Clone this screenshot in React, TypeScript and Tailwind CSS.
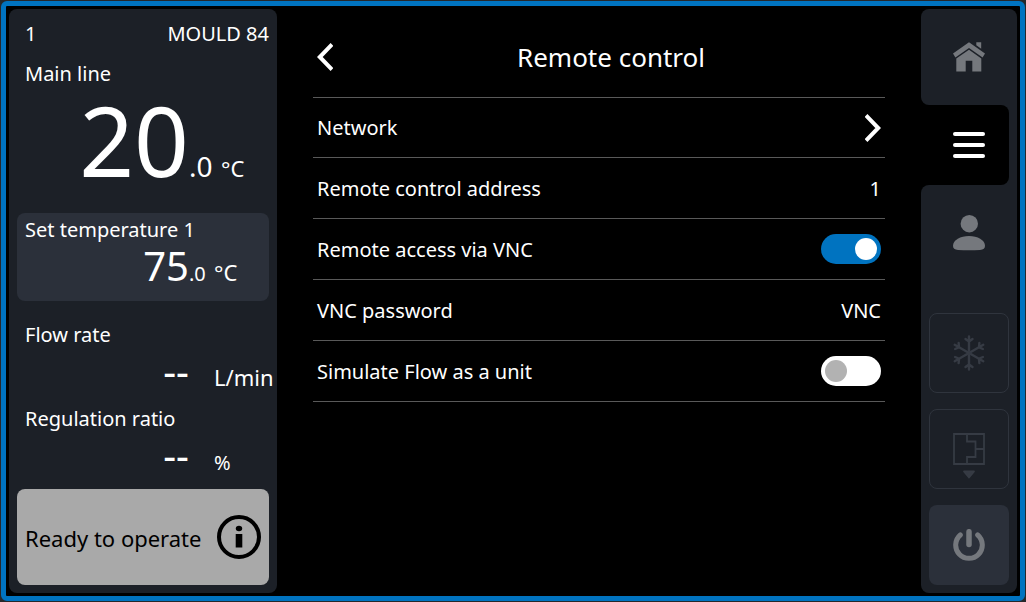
import { useState } from "react";
import type { ReactNode } from "react";

type ReadingProps = {
  label: string;
  value: string;
  decimal?: string;
  unit: string;
  unitClass?: string;
};

function Reading({ label, value, decimal, unit, unitClass = "text-[22px]" }: ReadingProps) {
  return (
    <div>
      <div className="px-2 text-xl leading-7">{label}</div>
      <div className="mt-0.5 flex h-10 items-baseline">
        <span className="flex-1 text-right text-[40px] leading-10">{value}</span>
        <span className="w-[25px] text-xl leading-7">{decimal}</span>
        <span className={`w-[55px] whitespace-nowrap leading-7 ${unitClass}`}>{unit}</span>
      </div>
    </div>
  );
}

function InfoIcon() {
  return (
    <svg viewBox="0 0 44 44" className="size-11 shrink-0" aria-hidden="true">
      <circle cx="22" cy="22" r="20" fill="none" stroke="#000" strokeWidth="4" />
      <ellipse cx="22" cy="13.5" rx="3.2" ry="2.7" />
      <path d="M18.7 19h6.6v13.5h-6.6z" />
    </svg>
  );
}

function StatusPanel() {
  return (
    <aside className="flex w-[268px] shrink-0 flex-col rounded-lg bg-[#1c2027] px-2 pt-[11px] pb-2">
      <div className="flex justify-between pl-2 text-xl leading-7">
        <span>1</span>
        <span>MOULD 84</span>
      </div>
      <div className="mt-3 px-2 text-xl leading-7">Main line</div>
      <div className="mt-0.5 flex h-[100px] items-baseline">
        <span className="flex-1 text-right text-[96px] leading-[100px]">20</span>
        <span className="w-8 text-[28px] leading-7">.0</span>
        <span className="w-12 text-[22px] leading-7">°C</span>
      </div>
      <button type="button" className="mt-[23px] h-[88px] rounded-lg bg-[#2b303a] pt-[3px] pb-[15px] text-left">
        <Reading label="Set temperature 1" value="75" decimal=".0" unit="°C" />
      </button>
      <div className="mt-5 flex flex-col gap-3.5">
        <Reading label="Flow rate" value="--" unit="L/min" />
        <Reading label="Regulation ratio" value="--" unit="%" unitClass="text-xl" />
      </div>
      <button
        type="button"
        className="mt-auto flex h-24 items-center justify-between rounded-lg bg-[#a9a9a9] px-2 text-[22px] text-black"
      >
        <span className="pt-0.5">Ready to operate</span>
        <InfoIcon />
      </button>
    </aside>
  );
}

function Chevron({ direction }: { direction: "left" | "right" }) {
  return (
    <svg
      viewBox="0 0 16 28"
      className="h-7 w-4"
      fill="none"
      stroke="currentColor"
      strokeWidth="4"
      aria-hidden="true"
    >
      <path d={direction === "left" ? "M15 1.5 2.8 14 15 26.5" : "M1 1.5 13.2 14 1 26.5"} />
    </svg>
  );
}

const rowClass = "flex items-center justify-between border-b border-[#595959] px-1 text-xl";

function SettingRow({ id, label, children }: { id: string; label: string; children: ReactNode }) {
  return (
    <div className={`h-[61px] ${rowClass}`}>
      <label htmlFor={id} className="pt-0.5">
        {label}
      </label>
      {children}
    </div>
  );
}

function TextValue({ id, initial }: { id: string; initial: string }) {
  const [value, setValue] = useState(initial);
  return (
    <input
      id={id}
      type="text"
      value={value}
      onChange={(e) => setValue(e.target.value)}
      className="w-40 bg-transparent pt-0.5 text-right outline-none"
    />
  );
}

function Toggle({ id, initial }: { id: string; initial: boolean }) {
  const [on, setOn] = useState(initial);
  return (
    <input
      id={id}
      type="checkbox"
      role="switch"
      checked={on}
      onChange={(e) => setOn(e.target.checked)}
      className="flex h-[30px] w-[60px] cursor-pointer appearance-none items-center rounded-full bg-white px-1 before:size-[22px] before:rounded-full before:bg-[#b2b2b2] before:content-[''] checked:justify-end checked:bg-[#0073c0] checked:before:bg-white"
    />
  );
}

function RemoteControl() {
  return (
    <main className="min-w-0 flex-1 px-9">
      <header className="flex h-[89px] items-center border-b border-[#595959] pt-2">
        <button type="button" aria-label="Back" className="w-6 pl-1">
          <Chevron direction="left" />
        </button>
        <h1 className="flex-1 text-center text-[26px]">Remote control</h1>
      </header>
      <button type="button" className={`h-15 w-full ${rowClass}`}>
        Network
        <Chevron direction="right" />
      </button>
      <SettingRow id="address" label="Remote control address">
        <TextValue id="address" initial="1" />
      </SettingRow>
      <SettingRow id="vnc" label="Remote access via VNC">
        <Toggle id="vnc" initial={true} />
      </SettingRow>
      <SettingRow id="password" label="VNC password">
        <TextValue id="password" initial="VNC" />
      </SettingRow>
      <SettingRow id="simulate" label="Simulate Flow as a unit">
        <Toggle id="simulate" initial={false} />
      </SettingRow>
    </main>
  );
}

function HomeIcon() {
  return (
    <svg viewBox="0 0 32 30" className="h-[30px] w-8" fill="currentColor" aria-hidden="true">
      <path d="M16 0.3 0 11.6l2.4 4L16 5.9l13.6 9.7 2.4-4z" />
      <path d="M23.3 0.3h4.9v6.4l-4.900-3.400z" />
      <path d="M16 7.8 3.300 16.500v12.900h9.400V18.700h6.600v10.700h9V16.500z" />
    </svg>
  );
}

function MenuIcon() {
  return (
    <svg viewBox="0 0 32 26" className="h-[26px] w-8" fill="currentColor" aria-hidden="true">
      <rect y="0" width="32" height="4" rx="2" />
      <rect y="11" width="32" height="4" rx="2" />
      <rect y="22" width="32" height="4" rx="2" />
    </svg>
  );
}

function UserIcon() {
  return (
    <svg viewBox="0 0 32 36" className="h-9 w-8" fill="currentColor" aria-hidden="true">
      <circle cx="16.3" cy="8.7" r="8.7" />
      <path d="M16 21c8.500 0 16 4 16 9.700 0 2.800-1.500 4-5 4.200q-11 .6-22 0C1.500 34.700 0 33.500 0 30.700c0-5.700 7.500-9.700 16-9.700z" />
    </svg>
  );
}

function SnowIcon() {
  return (
    <svg
      viewBox="-18 -18 36 36"
      className="size-9"
      fill="none"
      stroke="currentColor"
      strokeWidth="2.4"
      strokeLinecap="round"
      aria-hidden="true"
    >
      {[0, 60, 120, 180, 240, 300].map((angle) => (
        <path key={angle} transform={`rotate(${angle})`} d="M0 0V-16.500M-3.500-14 0-11.500 3.500-14" />
      ))}
    </svg>
  );
}

function MouldIcon() {
  return (
    <svg
      viewBox="0 -14 32 60"
      className="h-15 w-8"
      fill="none"
      stroke="currentColor"
      strokeWidth="1.8"
      aria-hidden="true"
    >
      <path d="M1 1h30v30H1z" />
      <path d="M14 1v7.500h8.500V24H14v7M22.500 16H31" />
      <path d="M11 38.500h10l-5 6z" fill="currentColor" strokeLinejoin="round" />
    </svg>
  );
}

function PowerIcon() {
  return (
    <svg
      viewBox="0 0 32 32"
      className="size-8"
      fill="none"
      stroke="currentColor"
      strokeWidth="5"
      strokeLinecap="round"
      aria-hidden="true"
    >
      <path d="M7.300 6a13.300 13.300 0 1 0 17.400 0" />
      <path d="M16 2.700v12.800" strokeWidth="5.500" />
    </svg>
  );
}

function NavBar() {
  const tile = "flex size-20 items-center justify-center rounded-lg";
  const disabledTile = "border border-[#2f343d] text-[#363b44]";
  return (
    <nav className="flex w-24 shrink-0 flex-col text-[#75787d]">
      <button
        type="button"
        aria-label="Home"
        className="flex h-24 items-center justify-center rounded-t-lg rounded-bl-lg bg-[#1c2027]"
      >
        <HomeIcon />
      </button>
      <div className="bg-[#1c2027] pr-2">
        <button
          type="button"
          aria-label="Menu"
          className="flex h-20 w-full items-center justify-center rounded-r-lg bg-black pl-2 text-white"
        >
          <MenuIcon />
        </button>
      </div>
      <div className="flex flex-1 flex-col items-center rounded-l-lg rounded-br-lg bg-[#1c2027] pb-2">
        <button type="button" aria-label="User" className="flex h-24 w-full items-center justify-center">
          <UserIcon />
        </button>
        <div className="mt-auto flex flex-col gap-4">
          <button type="button" aria-label="Cooling" disabled className={`${tile} ${disabledTile}`}>
            <SnowIcon />
          </button>
          <button type="button" aria-label="Mould evacuation" disabled className={`${tile} ${disabledTile}`}>
            <MouldIcon />
          </button>
          <button type="button" aria-label="Power" className={`${tile} bg-[#2b303a]`}>
            <PowerIcon />
          </button>
        </div>
      </div>
    </nav>
  );
}

export default function App() {
  return (
    <div className="flex min-h-screen bg-[#26282b] p-px font-['Noto_Sans',sans-serif] text-white">
      <div className="flex flex-1 rounded-md border-5 border-[#0073c0] bg-black p-[3px]">
        <StatusPanel />
        <RemoteControl />
        <NavBar />
      </div>
    </div>
  );
}
